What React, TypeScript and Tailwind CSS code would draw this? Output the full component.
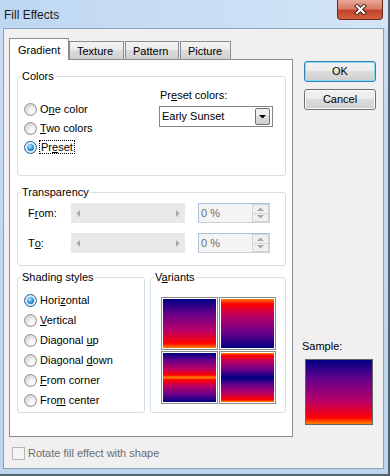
import React from 'react';

const sunset =
  'bg-[linear-gradient(to_bottom,#000082_0%,#66008c_30%,#ba0066_65%,#ff0000_90%,#ff8200_100%)]';

function Radio({ checked = false, children }: { checked?: boolean; children: React.ReactNode }) {
  return (
    <div className="flex h-full items-center gap-[3px]">
      <span
        className={`flex h-[13px] w-[13px] shrink-0 items-center justify-center rounded-full border ${
          checked
            ? 'border-[#2c628b] bg-[radial-gradient(circle_at_50%_50%,#ffffff_0%,#d6ecfa_60%,#a9cfe9_100%)]'
            : 'border-[#8f8f8f] bg-[radial-gradient(circle_at_65%_70%,#ffffff_0%,#eeeeee_35%,#c6c6c6_100%)]'
        }`}
      >
        {checked && (
          <span className="h-[7px] w-[7px] rounded-full bg-[radial-gradient(circle_at_40%_35%,#b8edff_0%,#2b8fd8_55%,#0d4e94_100%)]" />
        )}
      </span>
      <span>{children}</span>
    </div>
  );
}

function Tri({ dir, color = '#a6a6a6' }: { dir: 'left' | 'right' | 'up' | 'down'; color?: string }) {
  const pts = {
    left: '4,0 4,7 0.5,3.5',
    right: '0,0 0,7 3.5,3.5',
    up: '0,4 7,4 3.5,0.5',
    down: '0,0 7,0 3.5,3.5',
  }[dir];
  const horiz = dir === 'left' || dir === 'right';
  return (
    <svg width={horiz ? 4 : 7} height={horiz ? 7 : 4} viewBox={horiz ? '0 0 4 7' : '0 0 7 4'}>
      <polygon points={pts} fill={color} />
    </svg>
  );
}

function SliderRow({ children }: { children: React.ReactNode }) {
  return (
    <div className="flex h-[20px] items-stretch pl-[10px]">
      <div className="flex w-[43px] items-center">{children}</div>
      {/* disabled scrollbar */}
      <div className="flex w-[114px] items-center justify-between bg-[#e8e8e8] px-[5px]">
        <Tri dir="left" />
        <Tri dir="right" />
      </div>
      {/* spin edit */}
      <div className="ml-[13px] flex w-[72px] border border-[#cfcfcf] border-l-[#a9c3df] border-t-[#a9c3df] bg-[#f4f4f4]">
        <div className="flex flex-1 items-center pl-[2px] text-[#6d6d6d]">0 %</div>
        <div className="flex w-[17px] flex-col">
          <div className="flex flex-1 items-center justify-center border border-[#d6d6d6] bg-[#f0f0f0]">
            <Tri dir="up" />
          </div>
          <div className="flex flex-1 items-center justify-center border border-t-0 border-[#d6d6d6] bg-[#f0f0f0]">
            <Tri dir="down" />
          </div>
        </div>
      </div>
    </div>
  );
}

function WinButton({ children, isDefault = false }: { children: React.ReactNode; isDefault?: boolean }) {
  return (
    <button
      className={`flex h-[21px] w-[72px] items-center justify-center rounded-[3px] border bg-[linear-gradient(to_bottom,#f2f2f2_0%,#ebebeb_50%,#dddddd_50%,#cfcfcf_100%)] ${
        isDefault
          ? 'border-[#3c7fb1] shadow-[inset_0_0_0_1px_#7fdcf9]'
          : 'border-[#707070] shadow-[inset_0_0_0_1px_#fbfbfb]'
      }`}
    >
      {children}
    </button>
  );
}

export default function App() {
  return (
    <div className="font-['Liberation_Sans',Arial,sans-serif] text-[11px] leading-[13px] text-black">
      <div className="flex h-[476px] w-[390px] flex-col border-b-2 border-r-2 border-[#55616e] bg-[linear-gradient(to_bottom,#c9ddf3,#bcd4ee)]">
        {/* Title bar */}
        <div className="flex h-[28px] items-start justify-between bg-[linear-gradient(to_right,#bed7f1,#d3e5f7)]">
          <div className="pl-[4px] pt-[8px] text-[12px] leading-[14px] text-[#1b1b1b]">Fill Effects</div>
          <div className="mr-[5px] flex h-[20px] w-[46px] items-center justify-center rounded-b-[4px] border border-t-0 border-[#6b2a1f] bg-[linear-gradient(to_bottom,#e9a899_0%,#d97a65_45%,#c4442c_55%,#d4603f_100%)]">
            <svg width="13" height="11" viewBox="0 0 13 11">
              <path d="M3 2 L10 9 M10 2 L3 9" stroke="#3b1912" strokeWidth="4" strokeLinecap="square" />
              <path d="M3 2 L10 9 M10 2 L3 9" stroke="#ffffff" strokeWidth="2.2" strokeLinecap="square" />
            </svg>
          </div>
        </div>

        {/* Client area */}
        <div className="ml-[3px] flex h-[441px] w-[381px] flex-col border border-[#8ba0b8] bg-[#f0f0f0]">
          <div className="flex h-[408px] pl-[5px]">
            {/* Tabs + panel */}
            <div className="flex w-[284px] flex-col pt-[9px]">
              <div className="flex h-[21px] items-end">
                <div className="relative z-10 -mb-px h-[22px] w-[60px] border border-b-0 border-[#898c95] bg-white pl-[8px] pt-[5px]">
                  Gradient
                </div>
                <div className="h-[18px] w-[55px] border border-b-0 border-[#898c95] bg-[linear-gradient(to_bottom,#f3f3f3_0%,#ebebeb_50%,#dddddd_50%,#cfcfcf_100%)] pl-[7px] pt-[3px]">
                  Texture
                </div>
                <div className="ml-px h-[18px] w-[54px] border border-b-0 border-[#898c95] bg-[linear-gradient(to_bottom,#f3f3f3_0%,#ebebeb_50%,#dddddd_50%,#cfcfcf_100%)] pl-[7px] pt-[3px]">
                  Pattern
                </div>
                <div className="ml-px h-[18px] w-[51px] border border-b-0 border-[#898c95] bg-[linear-gradient(to_bottom,#f3f3f3_0%,#ebebeb_50%,#dddddd_50%,#cfcfcf_100%)] pl-[7px] pt-[3px]">
                  Picture
                </div>
              </div>

              <div className="h-[379px] border border-[#898c95] bg-white pl-[7px] pt-[10px]">
                {/* Colors */}
                <fieldset className="w-[269px] rounded-[3px] border border-[#d5dfe5]">
                  <legend className="ml-[3px] px-[1px]">Colors</legend>
                  <div className="flex h-[92px]">
                    <div className="flex w-[141px] flex-col pl-[6px] pt-[17px]">
                      <div className="h-[19px]">
                        <Radio>
                          O<span className="underline">n</span>e color
                        </Radio>
                      </div>
                      <div className="h-[19px]">
                        <Radio>
                          <span className="underline">T</span>wo colors
                        </Radio>
                      </div>
                      <div className="h-[19px]">
                        <Radio checked>
                          <span className="-ml-px border border-dotted border-black px-px">
                            Pr<span className="underline">e</span>set
                          </span>
                        </Radio>
                      </div>
                    </div>
                    <div className="flex flex-col pt-[6px]">
                      <div className="pl-px">
                        Pr<span className="underline">e</span>set colors:
                      </div>
                      <div className="mt-[4px] flex h-[21px] w-[114px] items-center border border-[#828790] bg-white pl-[2px]">
                        <span className="flex-1">Early Sunset</span>
                        <div className="mr-[2px] flex h-[17px] w-[15px] items-center justify-center rounded-[2px] border border-[#707070] bg-[linear-gradient(to_bottom,#f2f2f2_0%,#ebebeb_50%,#dddddd_50%,#cfcfcf_100%)]">
                          <Tri dir="down" color="#000000" />
                        </div>
                      </div>
                    </div>
                  </div>
                </fieldset>

                {/* Transparency */}
                <fieldset className="mt-[10px] w-[269px] rounded-[3px] border border-[#d5dfe5]">
                  <legend className="ml-[3px] px-[1px]">Transparency</legend>
                  <div className="flex flex-col gap-[10px] pb-[12px] pt-[4px]">
                    <SliderRow>
                      F<span className="underline">r</span>om:
                    </SliderRow>
                    <SliderRow>
                      T<span className="underline">o</span>:
                    </SliderRow>
                  </div>
                </fieldset>

                {/* Shading + Variants */}
                <div className="mt-[5px] flex w-[269px] gap-[5px]">
                  <fieldset className="w-[128px] rounded-[3px] border border-[#d5dfe5]">
                    <legend className="ml-[3px] px-[1px]">Shading styles</legend>
                    <div className="flex flex-col pb-[2px] pl-[6px] pt-[6px]">
                      <div className="h-[20px]">
                        <Radio checked>
                          Hori<span className="underline">z</span>ontal
                        </Radio>
                      </div>
                      <div className="h-[20px]">
                        <Radio>
                          <span className="underline">V</span>ertical
                        </Radio>
                      </div>
                      <div className="h-[20px]">
                        <Radio>
                          Diagonal <span className="underline">u</span>p
                        </Radio>
                      </div>
                      <div className="h-[20px]">
                        <Radio>
                          Diagonal <span className="underline">d</span>own
                        </Radio>
                      </div>
                      <div className="h-[20px]">
                        <Radio>
                          <span className="underline">F</span>rom corner
                        </Radio>
                      </div>
                      <div className="h-[20px]">
                        <Radio>
                          Fro<span className="underline">m</span> center
                        </Radio>
                      </div>
                    </div>
                  </fieldset>

                  <fieldset className="w-[136px] rounded-[3px] border border-[#d5dfe5]">
                    <legend className="ml-[3px] px-[1px]">
                      V<span className="underline">a</span>riants
                    </legend>
                    <div className="grid grid-cols-[57px_57px] gap-[1px] pb-[7px] pl-[10px] pt-[13px]">
                      <div className="h-[53px] border border-[#8b8b8b] bg-white p-px">
                        <div className={`h-full w-full ${sunset}`} />
                      </div>
                      <div className="h-[53px] border border-[#8b8b8b] bg-white p-px">
                        <div className="h-full w-full bg-[linear-gradient(to_top,#000082_0%,#66008c_30%,#ba0066_65%,#ff0000_90%,#ff8200_100%)]" />
                      </div>
                      <div className="h-[53px] border border-[#8b8b8b] bg-white p-px">
                        <div className="h-full w-full bg-[linear-gradient(to_bottom,#000082_0%,#66008c_15%,#ba0066_32%,#ff0000_45%,#ff8200_50%,#ff0000_55%,#ba0066_68%,#66008c_85%,#000082_100%)]" />
                      </div>
                      <div className="h-[53px] border border-[#8b8b8b] bg-white p-px">
                        <div className="h-full w-full bg-[linear-gradient(to_bottom,#ff8200_0%,#ff0000_5%,#ba0066_18%,#66008c_35%,#000082_50%,#66008c_65%,#ba0066_82%,#ff0000_95%,#ff8200_100%)]" />
                      </div>
                    </div>
                  </fieldset>
                </div>
              </div>
            </div>

            {/* Buttons + sample */}
            <div className="ml-[11px] flex w-[72px] flex-col pb-[12px] pt-[32px]">
              <WinButton isDefault>OK</WinButton>
              <div className="mt-[7px]">
                <WinButton>Cancel</WinButton>
              </div>
              <div className="mt-auto flex flex-col">
                <div className="-ml-[2px]">Sample:</div>
                <div className={`ml-px mt-[6px] h-[66px] w-[68px] border border-[#646464] ${sunset}`} />
              </div>
            </div>
          </div>

          {/* Rotate checkbox */}
          <div className="mt-[10px] flex items-center gap-[3px] pl-[8px]">
            <span className="h-[13px] w-[13px] border border-[#b7b7b7] bg-[#f4f4f4]" />
            <span className="text-[#6d6d6d]">Rotate fill effect with shape</span>
          </div>
        </div>
      </div>
    </div>
  );
}
